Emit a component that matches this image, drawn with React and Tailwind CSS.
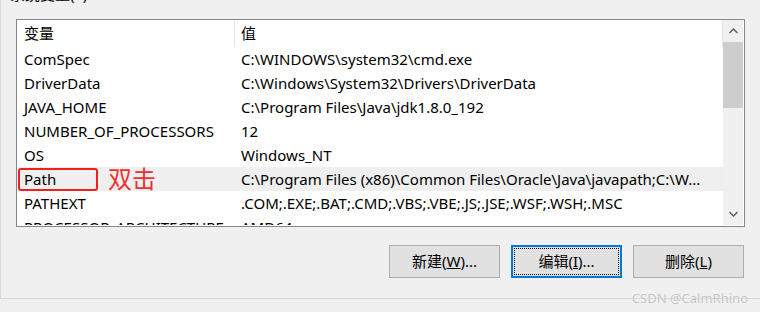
import React from "react";

const rows = [
  ["ComSpec", "C:\\WINDOWS\\system32\\cmd.exe"],
  ["DriverData", "C:\\Windows\\System32\\Drivers\\DriverData"],
  ["JAVA_HOME", "C:\\Program Files\\Java\\jdk1.8.0_192"],
  ["NUMBER_OF_PROCESSORS", "12"],
  ["OS", "Windows_NT"],
  ["Path", "C:\\Program Files (x86)\\Common Files\\Oracle\\Java\\javapath;C:\\W..."],
  ["PATHEXT", ".COM;.EXE;.BAT;.CMD;.VBS;.VBE;.JS;.JSE;.WSF;.WSH;.MSC"],
  ["PROCESSOR_ARCHITECTURE", "AMD64"],
];

const font = { fontFamily: '"Noto Sans", "Noto Sans CJK SC", sans-serif' };

function Btn({ children, focused }) {
  return (
    <div
      className={
        "relative flex h-[33px] w-[111px] items-center justify-center bg-[#e1e1e1] text-[15px] text-black " +
        (focused ? "border-2 border-[#0078d7]" : "border border-[#adadad]")
      }
    >
      {focused && <div className="pointer-events-none absolute inset-[1px] border border-dotted border-black" />}
      {children}
    </div>
  );
}

export default function App() {
  return (
    <div
      className="relative h-[312px] w-[760px] overflow-hidden bg-[#f0f0f0] text-black"
      style={font}
    >
      <div className="h-[299px] border-b border-l border-[#d9d9d9]">
        <div className="flex h-[19px]">
          <div className="-mt-[16px] pl-[9px] text-[15px] leading-[20px]">系统变量(S)</div>
        </div>
        <div className="ml-[15px] mr-[15px] flex h-[208px] border border-[#828790] bg-white pb-[1px] pr-[1px]">
          <div className="relative flex-1 overflow-hidden">
            <div className="flex h-[27px] items-center text-[15px]">
              <div className="w-[217px] pl-[7px]">变量</div>
              <div className="h-full w-px bg-[#e5e5e5]" />
              <div className="flex-1 pl-[6px]">值</div>
              <div className="h-full w-px bg-[#e5e5e5]" />
            </div>
            {rows.map(([k, v]) => (
              <div
                key={k}
                className={
                  "flex h-[24px] items-center whitespace-nowrap text-[15px] " +
                  (k === "Path" ? "bg-[#efefef]" : "")
                }
              >
                <div className="w-[217px] overflow-hidden pl-[7px]">{k}</div>
                <div className="flex-1 overflow-hidden pl-[7px]">{v}</div>
              </div>
            ))}
            <div className="absolute left-[1px] top-[148px] h-[23px] w-[80px] rounded-[3px] border-2 border-[#f02020]" />
            <div
              className="absolute left-[91px] top-[144px] text-[24px] leading-[30px] text-[#f03030]"
              style={font}
            >
              双击
            </div>
          </div>
          <div className="flex w-[20px] flex-col bg-[#f0f0f0]">
            <div className="flex h-[22px] items-center justify-center">
              <svg width="9" height="6" viewBox="0 0 9 6">
                <path d="M0.5 5 L4.5 1 L8.5 5" fill="none" stroke="#606060" strokeWidth="1.5" />
              </svg>
            </div>
            <div className="h-[66px] bg-[#cdcdcd]" />
            <div className="flex-1" />
            <div className="flex h-[22px] items-center justify-center">
              <svg width="9" height="6" viewBox="0 0 9 6">
                <path d="M0.5 1 L4.5 5 L8.5 1" fill="none" stroke="#606060" strokeWidth="1.5" />
              </svg>
            </div>
          </div>
        </div>
        <div className="mt-[18px] flex justify-end gap-[11px] pr-[16px]">
          <Btn>
            新建(<span className="underline">W</span>)...
          </Btn>
          <Btn focused>
            编辑(<span className="underline">I</span>)...
          </Btn>
          <Btn>
            删除(<span className="underline">L</span>)
          </Btn>
        </div>
      </div>
      <div
        className="absolute right-[12px] top-[290px] text-[13px] leading-[16px] text-[#c4c4c4]"
        style={{ ...font, textShadow: "0 0 1px #fff" }}
      >
        CSDN @CalmRhino
      </div>
    </div>
  );
}
